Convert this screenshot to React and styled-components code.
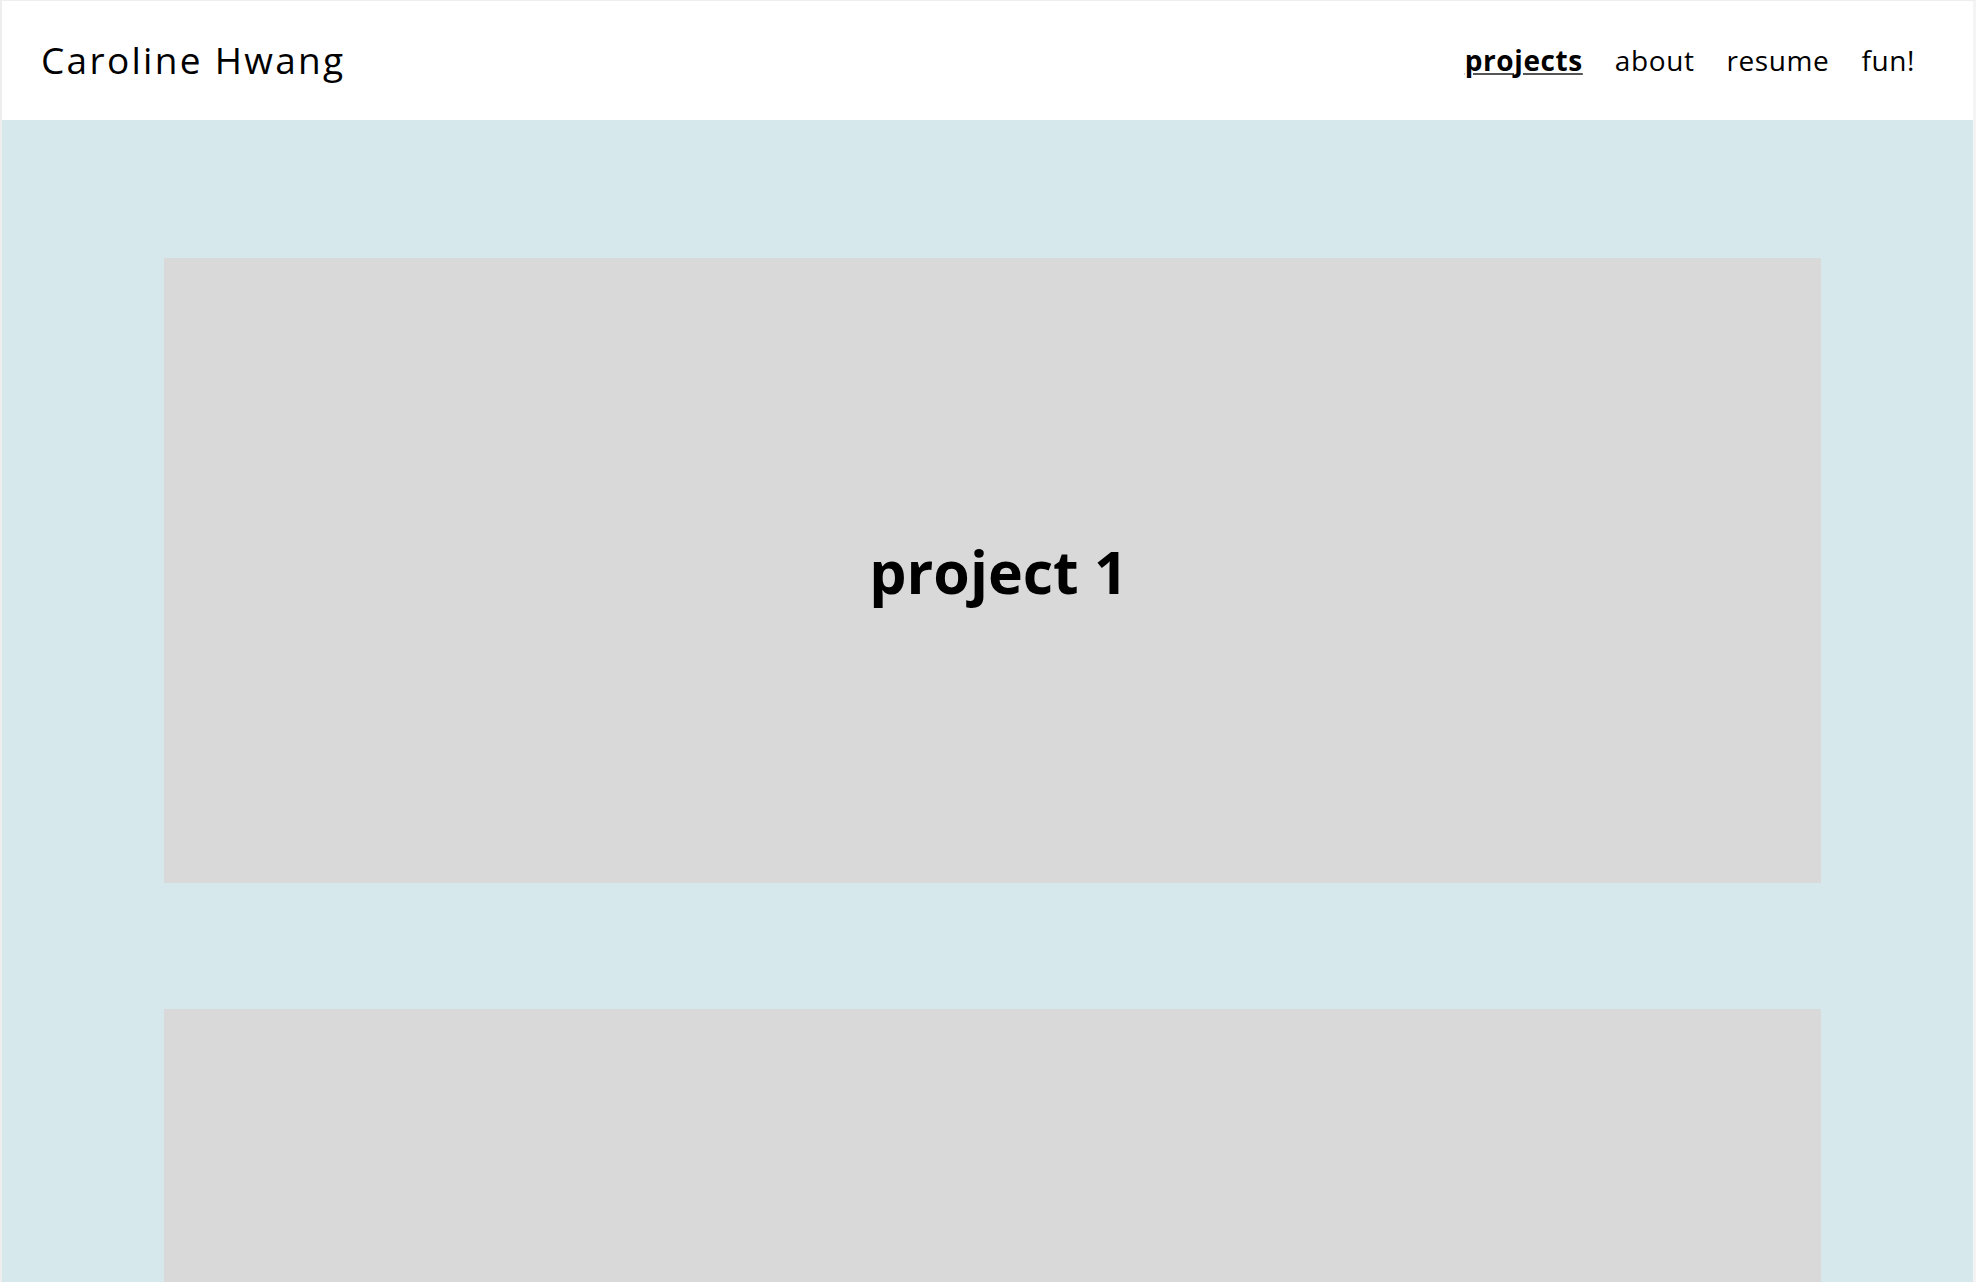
import React from "react";
import styled, { createGlobalStyle } from "styled-components";

const Global = createGlobalStyle`
  html, body { margin: 0; padding: 0; background: #ffffff; }
  body { font-family: "Open Sans", "Lato", sans-serif; color: #000; }
  * { box-sizing: border-box; }
`;

const Frame = styled.div`
  border-left: 2px solid #eeeeee;
  border-top: 1px solid #eeeeee;
  border-right: 3px solid #f4f4f4;
  min-height: 100vh;
  background: #d6e8ec;
`;

const Header = styled.header`
  height: 119px;
  background: #ffffff;
  display: flex;
  align-items: center;
  justify-content: space-between;
  padding: 0 58px 0 39px;
`;

const Brand = styled.div`
  font-size: 37px;
  font-weight: 400;
  letter-spacing: 2.3px;
  padding-bottom: 2px;
`;

const Nav = styled.nav`
  display: flex;
  align-items: center;
  gap: 32px;
`;

const NavLink = styled.a`
  font-size: 28px;
  font-weight: ${(p) => (p.$active ? 700 : 400)};
  letter-spacing: 0.6px;
  color: #000;
  text-decoration: ${(p) => (p.$active ? "underline" : "none")};
  text-decoration-color: #555;
  text-decoration-thickness: 2px;
  text-underline-offset: 2px;
  padding-bottom: 2px;
  cursor: pointer;
`;

const Main = styled.main`
  display: flex;
  flex-direction: column;
  gap: 126px;
  padding: 138px 152px 0 162px;
`;

const Card = styled.section`
  height: 625px;
  background: #d9d9d9;
  display: flex;
  align-items: center;
  justify-content: center;
`;

const CardTitle = styled.h2`
  margin: 0 0 0 12px;
  font-size: 59px;
  font-weight: 700;
`;

const projects = ["project 1", "project 2", "project 3"];
const links = ["projects", "about", "resume", "fun!"];

export default function App() {
  return (
    <>
      <Global />
      <Frame>
        <Header>
          <Brand>Caroline Hwang</Brand>
          <Nav>
            {links.map((l) => (
              <NavLink key={l} $active={l === "projects"}>
                {l}
              </NavLink>
            ))}
          </Nav>
        </Header>
        <Main>
          {projects.map((p) => (
            <Card key={p}>
              <CardTitle>{p}</CardTitle>
            </Card>
          ))}
        </Main>
      </Frame>
    </>
  );
}
